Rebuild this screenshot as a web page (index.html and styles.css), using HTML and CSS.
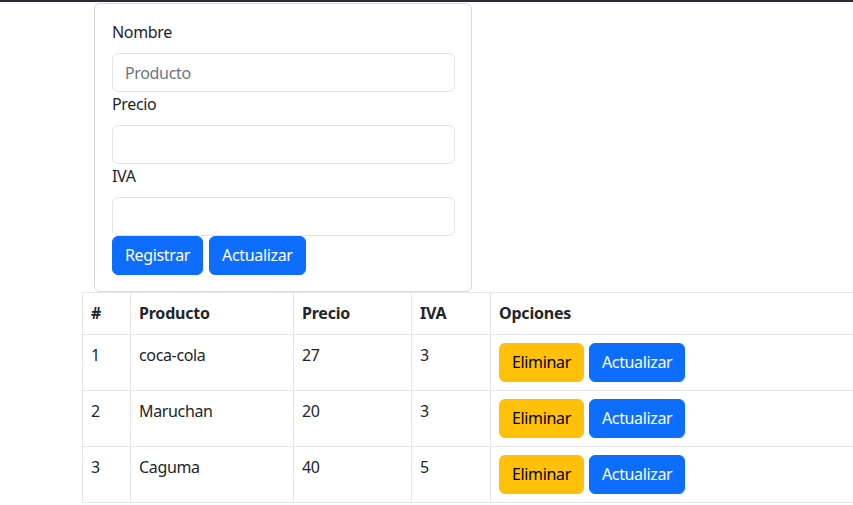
FILE: index.html
```html
<!DOCTYPE html>
<html lang="es">
<head>
<meta charset="utf-8">
<title>Productos</title>
<link rel="stylesheet" href="styles.css">
</head>
<body>
<div class="topbar"></div>
<div class="card">
  <form class="card-body">
    <label class="form-label">Nombre</label>
    <input class="form-control" type="text" placeholder="Producto">
    <label class="form-label">Precio</label>
    <input class="form-control" type="text">
    <label class="form-label">IVA</label>
    <input class="form-control" type="text">
    <div class="actions">
      <button type="button" class="btn btn-primary">Registrar</button>
      <button type="button" class="btn btn-primary">Actualizar</button>
    </div>
  </form>
</div>
<div class="table-wrap">
  <table class="table">
    <thead>
      <tr><th class="c-num">#</th><th class="c-prod">Producto</th><th class="c-precio">Precio</th><th class="c-iva">IVA</th><th>Opciones</th></tr>
    </thead>
    <tbody>
      <tr><td>1</td><td>coca-cola</td><td>27</td><td>3</td><td><div class="row-actions"><button class="btn btn-warning">Eliminar</button><button class="btn btn-primary">Actualizar</button></div></td></tr>
      <tr><td>2</td><td>Maruchan</td><td>20</td><td>3</td><td><div class="row-actions"><button class="btn btn-warning">Eliminar</button><button class="btn btn-primary">Actualizar</button></div></td></tr>
      <tr><td>3</td><td>Caguma</td><td>40</td><td>5</td><td><div class="row-actions"><button class="btn btn-warning">Eliminar</button><button class="btn btn-primary">Actualizar</button></div></td></tr>
    </tbody>
  </table>
</div>
</body>
</html>
```

FILE: styles.css
```css
* { box-sizing: border-box; }
html, body { margin: 0; padding: 0; }
body {
  font-family: "Noto Sans", "Open Sans", sans-serif;
  font-size: 16px;
  line-height: 25px;
  letter-spacing: -0.35px;
  color: #212529;
  background: #fff;
  overflow: hidden;
}
.topbar { height: 2px; background: #2d2935; }
.card {
  margin: 1px 0 0 94px;
  width: 378px;
  border: 1px solid #d9d9d9;
  border-radius: 6px;
}
.card-body { padding: 16px 16px 16px 17px; display: flex; flex-direction: column; }
.form-label { display: block; margin-bottom: 8px; }
.form-control {
  display: block;
  width: 100%;
  height: 39px;
  padding: 6px 12px;
  font: inherit;
  letter-spacing: inherit;
  color: #212529;
  border: 1px solid #e2e4e8;
  border-radius: 6px;
  background: #fff;
}
.form-control::placeholder { color: #6c757d; }
.actions { display: flex; gap: 6px; }
.btn {
  display: inline-block;
  font: inherit;
  letter-spacing: inherit;
  height: 39px;
  padding: 6px 12px;
  border: 1px solid transparent;
  border-radius: 6px;
  cursor: pointer;
}
.btn-primary { background: #0d6efd; border-color: #0d6efd; color: #fff; }
.btn-warning { background: #ffc107; border-color: #ffc107; color: #000; }
.row-actions { display: flex; gap: 5px; }
.table-wrap { margin-left: 82px; overflow: hidden; }
.table {
  width: 800px;
  border-collapse: collapse;
}
.table th, .table td {
  border: 1px solid #e5e7eb;
  padding: 8px;
  text-align: left;
  vertical-align: top;
}
.table th { font-weight: 700; letter-spacing: -0.2px; }
.c-num { width: 48px; }
.c-prod { width: 163px; }
.c-precio { width: 118px; }
.c-iva { width: 79px; }
```
